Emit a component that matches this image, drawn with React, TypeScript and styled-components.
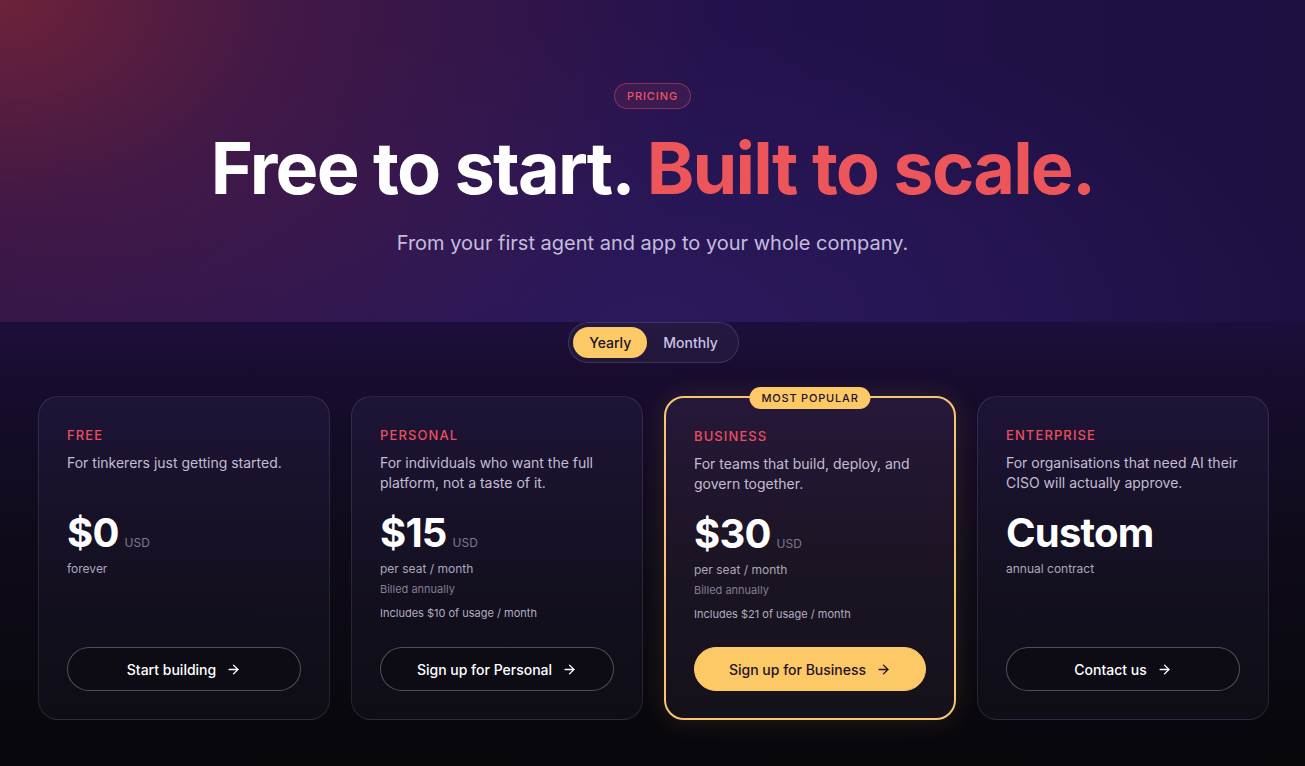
import React, { useState } from 'react';
import styled, { createGlobalStyle } from 'styled-components';
import { ArrowRight } from 'lucide-react';

type Plan = {
  name: string;
  desc: string;
  price: string;
  currency?: string;
  period: string;
  billed?: string;
  includes?: string;
  cta: string;
  featured?: boolean;
};

const plans: Plan[] = [
  {
    name: 'Free',
    desc: 'For tinkerers just getting started.',
    price: '$0',
    currency: 'USD',
    period: 'forever',
    cta: 'Start building',
  },
  {
    name: 'Personal',
    desc: 'For individuals who want the full platform, not a taste of it.',
    price: '$15',
    currency: 'USD',
    period: 'per seat / month',
    billed: 'Billed annually',
    includes: 'Includes $10 of usage / month',
    cta: 'Sign up for Personal',
  },
  {
    name: 'Business',
    desc: 'For teams that build, deploy, and govern together.',
    price: '$30',
    currency: 'USD',
    period: 'per seat / month',
    billed: 'Billed annually',
    includes: 'Includes $21 of usage / month',
    cta: 'Sign up for Business',
    featured: true,
  },
  {
    name: 'Enterprise',
    desc: 'For organisations that need AI their CISO will actually approve.',
    price: 'Custom',
    period: 'annual contract',
    cta: 'Contact us',
  },
];

const App = () => {
  const [billing, setBilling] = useState<'yearly' | 'monthly'>('yearly');

  return (
    <Page>
      <GlobalStyle />
      <Hero>
        <Eyebrow>Pricing</Eyebrow>
        <Title>
          Free to start. <Accent>Built to scale.</Accent>
        </Title>
        <Subtitle>From your first agent and app to your whole company.</Subtitle>
      </Hero>
      <PricingSection>
        <Toggle>
          <ToggleButton $active={billing === 'yearly'} onClick={() => setBilling('yearly')}>
            Yearly
          </ToggleButton>
          <ToggleButton $active={billing === 'monthly'} onClick={() => setBilling('monthly')}>
            Monthly
          </ToggleButton>
        </Toggle>
        <CardsGrid>
          {plans.map((plan) => (
            <Card key={plan.name} $featured={plan.featured}>
              {plan.featured && <Badge>Most popular</Badge>}
              <PlanName>{plan.name}</PlanName>
              <PlanDesc>{plan.desc}</PlanDesc>
              <PriceRow>
                <Price>{plan.price}</Price>
                {plan.currency && <Currency>{plan.currency}</Currency>}
              </PriceRow>
              <Period>{plan.period}</Period>
              {plan.billed && <Billed>{plan.billed}</Billed>}
              {plan.includes && <Includes>{plan.includes}</Includes>}
              <CtaButton $featured={plan.featured}>
                {plan.cta}
                <ArrowRight size={15} strokeWidth={2.2} />
              </CtaButton>
            </Card>
          ))}
        </CardsGrid>
      </PricingSection>
    </Page>
  );
};

export default App;

const GlobalStyle = createGlobalStyle`
  html, body {
    margin: 0;
    padding: 0;
    background: #08070c;
  }
  * {
    box-sizing: border-box;
  }
  body {
    font-family: Inter, 'Noto Sans', sans-serif;
    -webkit-font-smoothing: antialiased;
  }
`;

const Page = styled.div`
  min-height: 100vh;
  display: flex;
  flex-direction: column;
  background: #08070c;
  color: #fff;
`;

const Hero = styled.section`
  height: 322px;
  display: flex;
  flex-direction: column;
  align-items: center;
  padding-top: 83px;
  background:
    radial-gradient(ellipse 720px 520px at 0% 0%, rgba(118, 36, 56, 0.9) 0%, rgba(90, 30, 66, 0.55) 40%, rgba(40, 20, 80, 0) 100%),
    radial-gradient(ellipse 700px 300px at 50% 100%, #2b195c 0%, rgba(43, 25, 92, 0) 100%),
    linear-gradient(90deg, #22114a 0%, #23124e 50%, #1d0f40 100%);
`;

const Eyebrow = styled.div`
  height: 26px;
  padding: 0 12px;
  display: flex;
  align-items: center;
  border-radius: 13px;
  border: 1px solid rgba(232, 86, 98, 0.42);
  background: rgba(232, 86, 98, 0.1);
  color: #e85662;
  font-size: 11px;
  font-weight: 500;
  letter-spacing: 0.9px;
  text-transform: uppercase;
`;

const Title = styled.h1`
  margin: 16px 0 0;
  font-size: 72px;
  line-height: 86px;
  font-weight: 700;
  letter-spacing: -0.025em;
  color: #ffffff;
`;

const Accent = styled.span`
  color: #ec5559;
`;

const Subtitle = styled.p`
  margin: 19px 0 0;
  font-size: 20px;
  line-height: 26px;
  color: #c5bcdc;
`;

const PricingSection = styled.section`
  flex: 1;
  display: flex;
  flex-direction: column;
  align-items: center;
  padding: 0 36px 46px 38px;
  background: linear-gradient(180deg, #1d0f3c 0%, #170c2e 60px, #100b1c 200px, #0b0912 320px, #08070c 100%);
`;

const Toggle = styled.div`
  display: flex;
  align-items: center;
  height: 41px;
  padding: 4px;
  border-radius: 21px;
  border: 1px solid rgba(255, 255, 255, 0.13);
  background: rgba(255, 255, 255, 0.04);
`;

const ToggleButton = styled.button<{ $active?: boolean }>`
  height: 31px;
  padding: 0 16px;
  border: none;
  border-radius: 16px;
  font-family: inherit;
  font-size: 14px;
  font-weight: 500;
  cursor: pointer;
  background: ${(p) => (p.$active ? '#fdc866' : 'transparent')};
  color: ${(p) => (p.$active ? '#1c1428' : '#cbc1e6')};
`;

const CardsGrid = styled.div`
  width: 100%;
  margin-top: 33px;
  display: grid;
  grid-template-columns: repeat(4, 1fr);
  gap: 21px;
`;

const Card = styled.div<{ $featured?: boolean }>`
  position: relative;
  height: 324px;
  display: flex;
  flex-direction: column;
  padding: ${(p) => (p.$featured ? '29px 28px 27px' : '29px 28px 28px')};
  border-radius: 20px;
  border: ${(p) => (p.$featured ? '2px solid #f7c673' : '1px solid rgba(255, 255, 255, 0.1)')};
  background: ${(p) =>
    p.$featured
      ? 'linear-gradient(180deg, #26183a 0%, #1b1422 55%, #15111a 100%)'
      : 'linear-gradient(180deg, rgba(36, 26, 64, 0.6) 0%, rgba(24, 20, 38, 0.6) 60%, rgba(18, 16, 26, 0.7) 100%)'};
  box-shadow: ${(p) => (p.$featured ? '0 0 28px rgba(253, 200, 102, 0.12)' : 'none')};
`;

const Badge = styled.div`
  position: absolute;
  top: -11px;
  left: 50%;
  transform: translateX(-50%);
  height: 22px;
  padding: 0 12px;
  display: flex;
  align-items: center;
  border-radius: 11px;
  background: #fdc866;
  color: #1c1428;
  font-size: 11px;
  font-weight: 500;
  letter-spacing: 0.8px;
  text-transform: uppercase;
  white-space: nowrap;
`;

const PlanName = styled.div`
  font-size: 13px;
  line-height: 18px;
  font-weight: 500;
  letter-spacing: 1.1px;
  text-transform: uppercase;
  color: #e9505f;
`;

const PlanDesc = styled.p`
  margin: 9px 0 0;
  min-height: 40px;
  font-size: 14px;
  line-height: 19.5px;
  color: #c4bdd2;
`;

const PriceRow = styled.div`
  margin-top: 19px;
  display: flex;
  align-items: baseline;
  gap: 6px;
`;

const Price = styled.span`
  font-size: 40px;
  line-height: 42px;
  font-weight: 700;
  letter-spacing: -0.02em;
  color: #ffffff;
`;

const Currency = styled.span`
  font-size: 12px;
  color: #7f7790;
`;

const Period = styled.div`
  margin-top: 7px;
  font-size: 12px;
  line-height: 16px;
  color: #aea6bd;
`;

const Billed = styled.div`
  margin-top: 5px;
  font-size: 11px;
  line-height: 15px;
  color: #857d95;
`;

const Includes = styled.div`
  margin-top: 9px;
  font-size: 11px;
  line-height: 15px;
  color: #b4acc2;
`;

const CtaButton = styled.button<{ $featured?: boolean }>`
  margin-top: auto;
  height: 44px;
  width: 100%;
  display: flex;
  align-items: center;
  justify-content: center;
  gap: 10px;
  border-radius: 22px;
  font-family: inherit;
  font-size: 14px;
  font-weight: 500;
  cursor: pointer;
  border: 1px solid ${(p) => (p.$featured ? '#fdc866' : 'rgba(255, 255, 255, 0.28)')};
  background: ${(p) => (p.$featured ? '#fdc866' : 'rgba(10, 9, 16, 0.5)')};
  color: ${(p) => (p.$featured ? '#1c1428' : '#ffffff')};
`;
